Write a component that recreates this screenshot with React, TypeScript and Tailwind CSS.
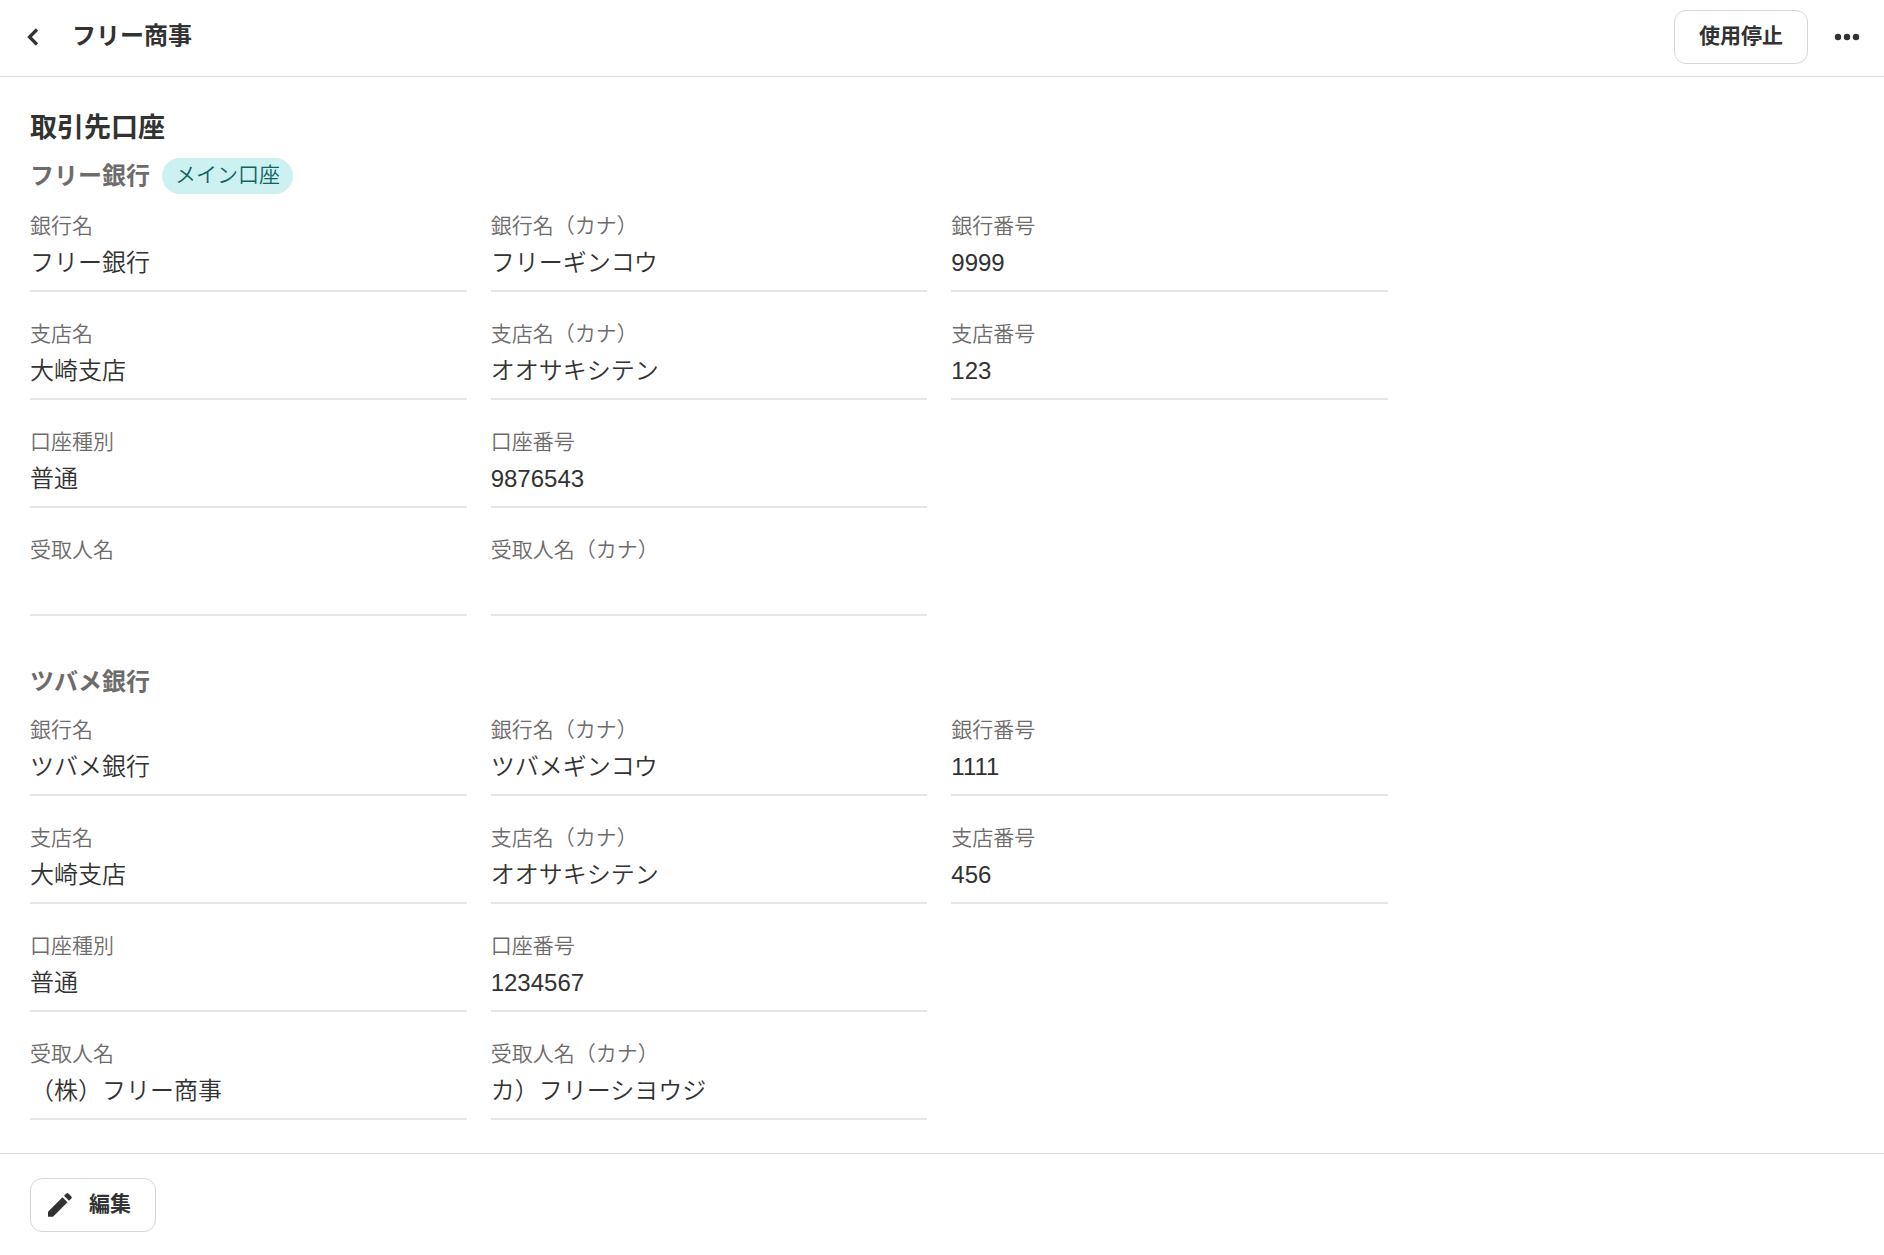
import React from "react";

type Item = { label: string; value: string };

type Account = {
  name: string;
  main?: boolean;
  rows: Item[][];
};

const accounts: Account[] = [
  {
    name: "フリー銀行",
    main: true,
    rows: [
      [
        { label: "銀行名", value: "フリー銀行" },
        { label: "銀行名（カナ）", value: "フリーギンコウ" },
        { label: "銀行番号", value: "9999" },
      ],
      [
        { label: "支店名", value: "大崎支店" },
        { label: "支店名（カナ）", value: "オオサキシテン" },
        { label: "支店番号", value: "123" },
      ],
      [
        { label: "口座種別", value: "普通" },
        { label: "口座番号", value: "9876543" },
      ],
      [
        { label: "受取人名", value: "" },
        { label: "受取人名（カナ）", value: "" },
      ],
    ],
  },
  {
    name: "ツバメ銀行",
    rows: [
      [
        { label: "銀行名", value: "ツバメ銀行" },
        { label: "銀行名（カナ）", value: "ツバメギンコウ" },
        { label: "銀行番号", value: "1111" },
      ],
      [
        { label: "支店名", value: "大崎支店" },
        { label: "支店名（カナ）", value: "オオサキシテン" },
        { label: "支店番号", value: "456" },
      ],
      [
        { label: "口座種別", value: "普通" },
        { label: "口座番号", value: "1234567" },
      ],
      [
        { label: "受取人名", value: "（株）フリー商事" },
        { label: "受取人名（カナ）", value: "カ）フリーシヨウジ" },
      ],
    ],
  },
];

function AccountSection({ account }: { account: Account }) {
  return (
    <section>
      <div className="flex items-start gap-3 mb-4">
        <h3 className="text-[24px] leading-[36px] font-bold text-[#6e6b6b]">{account.name}</h3>
        {account.main && (
          <span className="mb-0.5 px-[13px] pb-0.5 rounded-full bg-[#cdf1f0] text-[21px] leading-[34px] font-[350] text-[#0f6461]">
            メイン口座
          </span>
        )}
      </div>
      <div className="flex flex-col gap-7">
        {account.rows.map((row, i) => (
          <dl key={i} className="grid grid-cols-3 gap-6">
            {row.map((item) => (
              <div key={item.label} className="border-b-2 border-[#e4e7ea] pb-[9px]">
                <dt className="mb-[5px] text-[21px] leading-[28px] font-[350] text-[#6e6b6b]">{item.label}</dt>
                <dd className="min-h-9 text-[24px] leading-[36px] font-[350] text-[#323232]">{item.value}</dd>
              </div>
            ))}
          </dl>
        ))}
      </div>
    </section>
  );
}

export default function App() {
  return (
    <div className="min-h-screen bg-white text-[#323232] font-['Liberation_Sans','Noto_Sans_CJK_JP',sans-serif]" lang="ja">
      <header className="flex items-center justify-between border-b border-[#dcdcdc] pl-4 pr-5 pt-2.5 pb-3">
        <div className="flex items-center gap-6">
          <button type="button" aria-label="戻る" className="flex h-8 w-8 items-center justify-center">
            <svg className="w-8 h-8" viewBox="0 0 32 32" fill="none" stroke="currentColor" strokeWidth={3.2}>
              <path d="m21 8.500-7.500 7.500 7.500 7.500" />
            </svg>
          </button>
          <h1 className="pb-0.5 text-[24px] leading-[36px] font-bold">フリー商事</h1>
        </div>
        <div className="flex items-center gap-6">
          <button type="button" className="h-[54px] rounded-xl border border-[#d7d7d7] px-6 pb-0.5 text-[21px] font-bold whitespace-nowrap">
            使用停止
          </button>
          <button type="button" aria-label="メニュー" className="flex h-8 w-8 items-center justify-center">
            <svg className="w-8 h-8" viewBox="0 0 32 32" fill="currentColor">
              <circle cx="6" cy="16" r="3.2" />
              <circle cx="15" cy="16" r="3.2" />
              <circle cx="24" cy="16" r="3.2" />
            </svg>
          </button>
        </div>
      </header>

      <main className="px-[30px] pt-[31px] pb-[33px]">
        <h2 className="mb-2.5 text-[27px] leading-[40px] font-bold">取引先口座</h2>
        <div className="flex max-w-[1358px] flex-col gap-12">
          {accounts.map((account) => (
            <AccountSection key={account.name} account={account} />
          ))}
        </div>
      </main>

      <footer className="border-t border-[#d9dcde] px-[30px] py-6">
        <button type="button" className="flex h-[54px] items-center gap-[15px] rounded-xl border border-[#d7d7d7] pl-[15px] pr-6 text-[21px] font-bold">
          <svg className="w-7 h-7" viewBox="0 0 28 28" fill="currentColor">
            <path d="M2 20.800 16.500 6.300l5 5L7 25.800H2.600a.6.6 0 0 1-.6-.6z" />
            <path d="m18 4.800 2.400-2.400a1.400 1.400 0 0 1 2 0l3 3a1.400 1.400 0 0 1 0 2L23 9.800z" />
          </svg>
          <span className="pb-0.5">編集</span>
        </button>
      </footer>
    </div>
  );
}
